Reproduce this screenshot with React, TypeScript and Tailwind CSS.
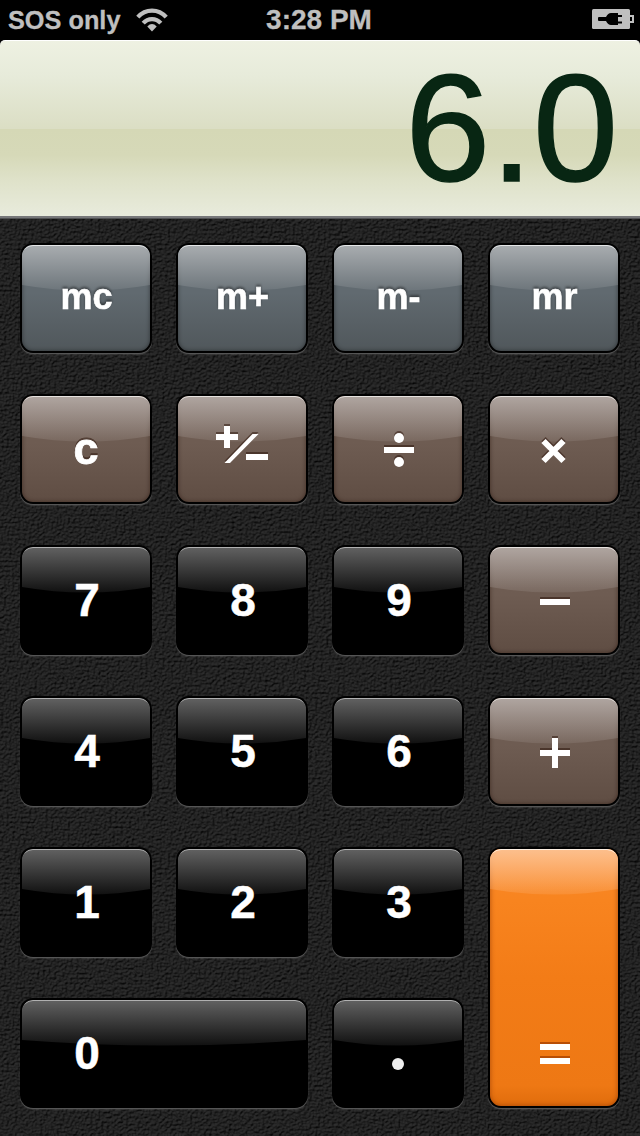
import type { ReactNode } from "react";

type Tone = "slate" | "brown" | "black" | "orange";

const tones: Record<Tone, { body: string; gloss: string; line: string; icon: string }> = {
  slate: {
    body: "bg-[linear-gradient(#616a70_0%,#616a70_45%,#50575b_100%)] shadow-[inset_0_0_4px_rgba(0,0,0,0.45)]",
    gloss: "text-[#a9adb0]",
    line: "border-[#e4e6e7]",
    icon: "drop-shadow-[0_-2px_1px_rgba(0,0,0,0.4)]",
  },
  brown: {
    body: "bg-[linear-gradient(#6f5d53_0%,#6e5c52_45%,#5f4d43_100%)] shadow-[inset_0_0_4px_rgba(30,10,0,0.5)]",
    gloss: "text-[#b0a6a1]",
    line: "border-[#e6e2df]",
    icon: "drop-shadow-[0_-1.5px_0.5px_rgba(40,15,5,0.5)]",
  },
  black: {
    body: "bg-black",
    gloss: "text-[#626262]",
    line: "border-[#b0b0b0]",
    icon: "",
  },
  orange: {
    body: "bg-[linear-gradient(#f98a2c_0%,#f8841f_20%,#f37c17_50%,#ee7814_92%,#e06c0c_100%)] shadow-[inset_0_0_5px_rgba(120,40,0,0.6)]",
    gloss: "text-[#fdc08e]",
    line: "border-[#fff1e4]",
    icon: "drop-shadow-[0_-1.5px_0.5px_rgba(160,60,0,0.7)]",
  },
};

function Key({
  id,
  tone,
  wide = false,
  tall = false,
  children,
}: {
  id: string;
  tone: Tone;
  wide?: boolean;
  tall?: boolean;
  children: ReactNode;
}) {
  const t = tones[tone];
  return (
    <button
      className={
        "relative rounded-[13px] bg-black p-[2px] shadow-[0_1px_0_#555,0_2px_1px_rgba(120,120,120,0.25)] " +
        (wide ? "col-span-2 " : "") +
        (tall ? "row-span-2" : "")
      }
    >
      <span className={"relative flex h-full w-full overflow-hidden rounded-[11px] " + t.body}>
        <svg
          className={"absolute inset-x-0 top-0 h-[46px] w-full " + t.gloss}
          viewBox="0 0 128 46"
          preserveAspectRatio="none"
        >
          <defs>
            <linearGradient id={"gloss-" + id} x1="0" y1="0" x2="0" y2="1">
              <stop offset="0" stopColor="currentColor" />
              <stop offset="1" stopColor="currentColor" stopOpacity="0.17" />
            </linearGradient>
          </defs>
          <path d="M0 0H128V40Q64 51 0 40Z" fill={"url(#gloss-" + id + ")"} />
        </svg>
        <span className={"absolute inset-0 rounded-[11px] border-t-[1.5px] [mask-image:linear-gradient(black_4px,transparent_14px)] " + t.line} />
        <span
          className={
            "relative flex items-center justify-center text-white " +
            (wide ? "h-full w-[130px]" : tall ? "mt-auto h-[106px] w-full" : "h-full w-full") +
            " " +
            t.icon
          }
        >
          {children}
        </span>
      </span>
    </button>
  );
}

function Digit({ value, wide = false }: { value: string; wide?: boolean }) {
  return (
    <span
      className={
        "text-[46px] leading-[46px] font-bold [-webkit-text-stroke:0.5px_white] " + (wide ? "" : "pl-[2px]")
      }
    >
      {value}
    </span>
  );
}

function Memory({ value }: { value: string }) {
  return (
    <span className="pb-[2px] pl-[1px] text-[36px] leading-[40px] font-bold [-webkit-text-stroke:0.6px_white]">
      {value}
    </span>
  );
}

function Glyph({ label, children }: { label: string; children: ReactNode }) {
  return (
    <svg width="128" height="106" viewBox="0 0 128 106" fill="currentColor" aria-label={label}>
      {children}
    </svg>
  );
}

function Leather() {
  return (
    <svg className="absolute inset-0 h-full w-full" aria-hidden="true">
      <defs>
        <filter id="leather" x="0" y="0" width="100%" height="100%" colorInterpolationFilters="sRGB">
          <feTurbulence type="fractalNoise" baseFrequency="0.36 0.41" numOctaves="5" seed="23" result="n" />
          <feColorMatrix in="n" type="matrix" values="0 0 0 0 0  0 0 0 0 0  0 0 0 0 0  1 0 0 0 0" result="bump" />
          <feDiffuseLighting in="bump" surfaceScale="1.9" diffuseConstant="0.18" lightingColor="#ffffff">
            <feDistantLight azimuth="235" elevation="50" />
          </feDiffuseLighting>
        </filter>
      </defs>
      <rect width="100%" height="100%" filter="url(#leather)" />
    </svg>
  );
}

export default function App() {
  return (
    <div className="flex h-[1136px] w-[640px] flex-col overflow-hidden bg-black font-['Liberation_Sans',Arial,sans-serif]">
      <header className="grid h-10 shrink-0 grid-cols-3 items-center text-[#bfbfbf]">
        <div className="flex items-center pl-2">
          <span className="text-[25.3px] leading-10 font-bold whitespace-nowrap [-webkit-text-stroke:0.3px_#bfbfbf]">SOS only</span>
          <svg className="ml-[16px] shrink-0" width="32" height="24" viewBox="0 0 32 24" fill="none" stroke="currentColor" aria-label="Wi-Fi">
            <path d="M1.800 9.200C9.500 0.400 22.500 0.400 30.200 9.200" strokeWidth="4.200" />
            <path d="M7.200 15.200C12 9.800 20 9.800 24.800 15.200" strokeWidth="4.200" />
            <path d="M16 23.500L11.300 18.500Q16 13.700 20.700 18.500Z" fill="currentColor" stroke="none" />
          </svg>
        </div>
        <div className="pr-[2px] text-center text-[28px] leading-10 font-bold whitespace-nowrap [-webkit-text-stroke:0.3px_#bfbfbf]">3:28 PM</div>
        <div className="flex justify-end pr-[6px] pb-[2px]">
          <svg width="42" height="20" viewBox="0 0 42 20" aria-label="Charging">
            <rect width="38" height="20" rx="1.500" fill="currentColor" />
            <path d="M38 7H41V13H38" fill="none" stroke="currentColor" strokeWidth="2" />
            <path
              d="M6 9Q6 8 7 8H14Q16 4 19 4H26V6H30V8H26V12.500H30V14.500H26V16H19Q16 16 14 12H7Q6 12 6 11Z"
              fill="#000"
            />
          </svg>
        </div>
      </header>

      <section className="flex h-44 shrink-0 items-center justify-end rounded-t-[5px] border-t border-white bg-[linear-gradient(#eef1e2_0%,#e7ebda_20%,#dbdec4_50%,#d5d8b6_50.5%,#d6d9b8_65%,#dfe2ca_80%,#e8ebdc_100%)] pr-[22px] pb-[2px]">
        <span className="text-[153px] leading-[170px] text-[#082613] [-webkit-text-stroke:1.5px_#082613]">6.0</span>
      </section>

      <main className="relative h-[920px] border-t-2 border-t-[#77787a] bg-[#222]">
        <Leather />
        <div className="relative h-px bg-[#505153]" />
        <div className="relative grid grid-cols-[132px_132px_132px_132px] grid-rows-[repeat(6,110px)] gap-x-6 gap-y-[41px] px-5 pt-6">
          <Key id="mc" tone="slate"><Memory value="mc" /></Key>
          <Key id="mplus" tone="slate"><Memory value="m+" /></Key>
          <Key id="mminus" tone="slate"><Memory value="m-" /></Key>
          <Key id="mr" tone="slate"><Memory value="mr" /></Key>

          <Key id="c" tone="brown">
            <span className="pb-[1px] text-[45px] leading-[46px] font-bold [-webkit-text-stroke:0.8px_white]">c</span>
          </Key>
          <Key id="sign" tone="brown">
            <Glyph label="plus minus">
              <path d="M38 38h8v-8h6v8h8v6h-8v8h-6v-8h-8zM46.500 67L74.500 38h6L52 67zM68 58h22v6H68z" />
            </Glyph>
          </Key>
          <Key id="divide" tone="brown">
            <Glyph label="divide">
              <path d="M50 51h30v6H50z" />
              <circle cx="65" cy="42" r="5" />
              <circle cx="65" cy="66" r="5" />
            </Glyph>
          </Key>
          <Key id="times" tone="brown">
            <Glyph label="times">
              <path d="M53.500 45L73.500 65M73.500 45L53.500 65" stroke="currentColor" strokeWidth="6" />
            </Glyph>
          </Key>

          <Key id="k7" tone="black"><Digit value="7" /></Key>
          <Key id="k8" tone="black"><Digit value="8" /></Key>
          <Key id="k9" tone="black"><Digit value="9" /></Key>
          <Key id="minus" tone="brown">
            <Glyph label="minus"><path d="M50 52h30v6H50z" /></Glyph>
          </Key>

          <Key id="k4" tone="black"><Digit value="4" /></Key>
          <Key id="k5" tone="black"><Digit value="5" /></Key>
          <Key id="k6" tone="black"><Digit value="6" /></Key>
          <Key id="plus" tone="brown">
            <Glyph label="plus"><path d="M50 52h12V40h6v12h12v6H68v12h-6V58H50z" /></Glyph>
          </Key>

          <Key id="k1" tone="black"><Digit value="1" /></Key>
          <Key id="k2" tone="black"><Digit value="2" /></Key>
          <Key id="k3" tone="black"><Digit value="3" /></Key>
          <Key id="equals" tone="orange" tall>
            <Glyph label="equals"><path d="M50 44h30v6H50zM50 58h30v6H50z" /></Glyph>
          </Key>

          <Key id="k0" tone="black" wide><Digit value="0" wide /></Key>
          <Key id="point" tone="black">
            <Glyph label="decimal point"><circle cx="64" cy="64" r="6" fill="#eeeeee" /></Glyph>
          </Key>
        </div>
      </main>
    </div>
  );
}
